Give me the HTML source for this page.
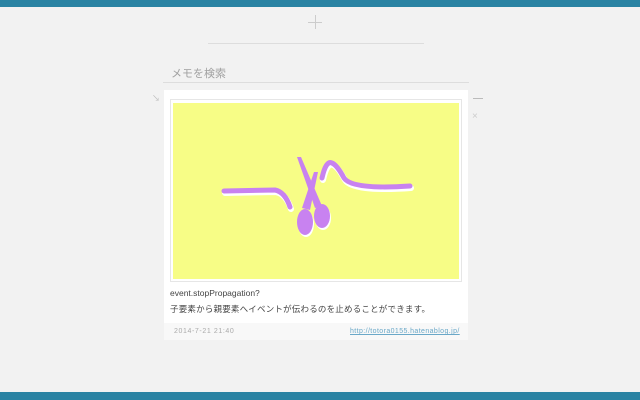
<!DOCTYPE html>
<html><head><meta charset="utf-8"><style>
body{margin:0;width:640px;height:400px;background:#f2f2f2;position:relative;overflow:hidden;font-family:"Liberation Sans","Noto Sans CJK JP",sans-serif}
.bar{position:absolute;left:0;width:640px;background:#2a83a3}
.abs{position:absolute}
</style></head><body>
<div class="bar" style="top:0;height:7px"></div>
<div class="bar" style="top:392px;height:8px"></div>
<div class="abs" style="left:308px;top:22px;width:14px;height:1px;background:#ccc"></div>
<div class="abs" style="left:315px;top:15px;width:1px;height:14px;background:#ccc"></div>
<div class="abs" style="left:208px;top:43px;width:216px;height:1px;background:#ddd"></div>
<div class="abs" style="left:171px;top:65px;font-size:11px;color:#a0a0a0">メモを検索</div>
<div class="abs" style="left:163px;top:82px;width:306px;height:1px;background:#ddd"></div>
<div class="abs" style="left:152px;top:93px;font-size:8px;color:#bbb">↘</div>
<div class="abs" style="left:473px;top:98px;width:10px;height:1px;background:#bbb"></div>
<div class="abs" style="left:472px;top:111px;font-size:10px;color:#ccc">×</div>
<div class="abs" style="left:164px;top:90px;width:304px;height:250px;background:#fff"></div>
<div class="abs" style="left:170px;top:99px;width:290px;height:181px;border:1px solid #e6e6e6"></div>
<svg class="abs" style="left:173px;top:103px" width="286" height="176" viewBox="173 103 286 176">
<rect x="173" y="103" width="286" height="176" fill="#f7fd86"/>
<g fill="none" stroke="#fff" stroke-width="6" stroke-linecap="round" transform="translate(1,2)">
<path d="M224 191 L275 190 Q285 192 290 207"/>
<path d="M322 178 Q326 160 332 163 Q337 165 344 178 Q352 190 410 186"/>
</g>
<g fill="none" stroke="#c882f0" stroke-width="5" stroke-linecap="round">
<path d="M224 191 L275 190 Q285 192 290 207"/>
<path d="M322 178 Q326 160 332 163 Q337 165 344 178 Q352 190 410 186"/>
</g>
<g fill="#fff" transform="translate(1,2)">
<ellipse cx="305" cy="222" rx="8" ry="13"/>
<ellipse cx="322" cy="216" rx="8" ry="12"/>
</g>
<g fill="#c882f0">
<polygon points="297,157 301,157 322,206 315,208"/>
<polygon points="314,172 318,172 310,210 302,208"/>
<ellipse cx="305" cy="222" rx="8" ry="13"/>
<ellipse cx="322" cy="216" rx="8" ry="12"/>
</g>
</svg>
<div class="abs" style="left:170px;top:288px;font-size:8.5px;color:#444">event.stopPropagation?</div>
<div class="abs" style="left:170px;top:303px;font-size:8.5px;color:#444;letter-spacing:0.2px">子要素から親要素へイベントが伝わるのを止めることができます。</div>
<div class="abs" style="left:164px;top:323px;width:304px;height:17px;background:#f8f8f8"></div>
<div class="abs" style="left:174px;top:328px;font-size:7px;color:#aaa;letter-spacing:0.6px">2014-7-21 21:40</div>
<div class="abs" style="left:350px;top:328px;font-size:7px;color:#6aa8c8;text-decoration:underline;letter-spacing:0.4px">http://totora0155.hatenablog.jp/</div>
</body></html>
